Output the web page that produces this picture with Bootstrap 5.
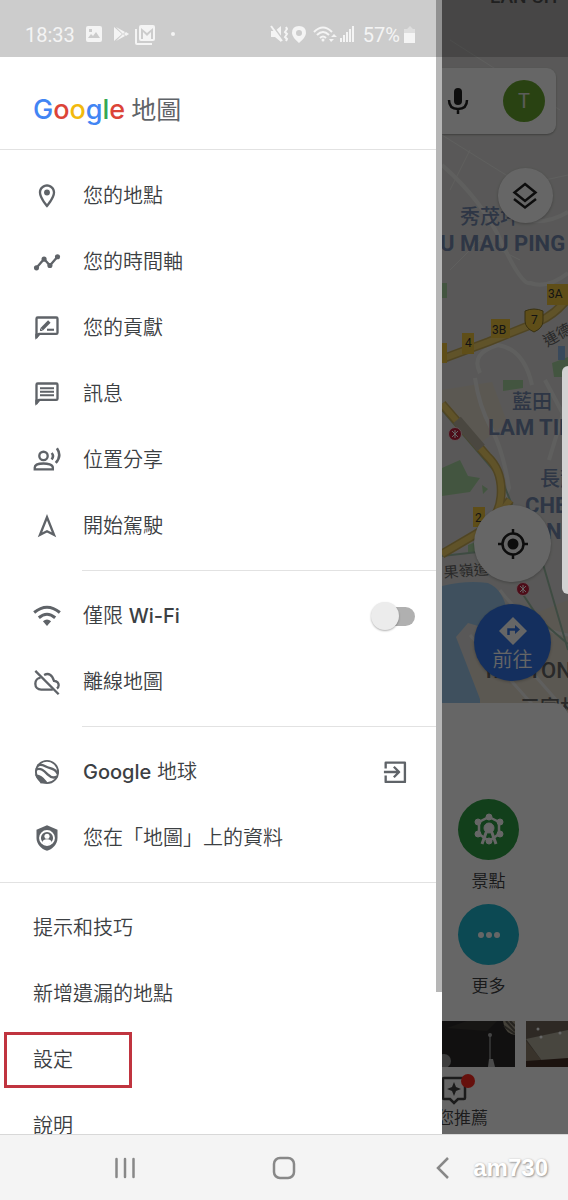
<!DOCTYPE html>
<html lang="zh-Hant">
<head>
<meta charset="utf-8">
<meta name="viewport" content="width=device-width, initial-scale=1">
<title>Google 地圖</title>
<link href="https://cdn.jsdelivr.net/npm/bootstrap@5.3.0/dist/css/bootstrap.min.css" rel="stylesheet">
<style>
  body { font-family: Inter, "Noto Sans CJK TC", sans-serif; font-size: 20px; line-height: 28px; color: #3c4043; background: #fff; }
  .app-stage { display: grid; grid-template-columns: minmax(0, 1fr) 126px; min-height: 0; }
  svg { display: block; flex: none; }

  /* Status bar */
  .status-bar { height: 57px; padding: 12px 152px 0 25px; background: rgba(0,0,0,.2); color: #f4f4f4; font-family: Roboto, sans-serif; z-index: 3; }

  /* Drawer */
  .drawer { background: #fff; padding-top: 57px; }
  .drawer-head { height: 93px; padding-left: 33px; padding-top: 13px; gap: 6px; border-bottom: 1px solid #e2e2e2; font-size: 25px; color: #5f6368; }
  .brand-word { font-size: 27px; font-weight: 500; }
  .c-blue { color: #4285f4; } .c-red { color: #dc4437; } .c-yellow { color: #f2b90c; } .c-green { color: #34a853; }
  .menu-group { padding: 12px 0 11px; border-bottom: 1px solid #e2e2e2; }
  .menu-group.first { padding: 13px 0 12px; }
  .menu-group.inset-line { border-bottom: 0; background: linear-gradient(#e2e2e2, #e2e2e2) 82px 100% / 100% 1px no-repeat; padding-bottom: 12px; }
  .menu-group.last { border-bottom: 0; }
  .menu-row { height: 66px; padding: 0 33px; display: flex; align-items: center; gap: 22px; color: #3c4043; text-decoration: none; font-weight: 350; white-space: nowrap; }
  .menu-row .latin { font-weight: 500; }
  .menu-row svg { color: #5f6368; }
  .menu-row.marked { height: 56px; width: 128px; margin: 5px 4px; padding: 0 26px; border: 3px solid #c0343f; }
  .wifi-switch { min-height: 0; padding: 0; margin: 0 -6px 0 auto; }
  .wifi-switch .form-check-input { appearance: none; display: block; float: none; margin: 0; width: 44px; height: 30px; border: 0; border-radius: 0; box-shadow: none; background: none; position: relative; }
  .wifi-switch .form-check-input::before { content: ""; position: absolute; left: 12px; top: 6px; width: 32px; height: 19px; border-radius: 10px; background: #b0b0b0; }
  .wifi-switch .form-check-input::after { content: ""; position: absolute; left: 0; top: 1px; width: 28px; height: 28px; border-radius: 50%; background: #ececec; box-shadow: 0 1px 2px rgba(0,0,0,.3); }
  .wifi-switch .form-check-input:checked::after { left: 16px; }
  .open-icon { margin-left: auto; }
  .drawer-scroll { top: 0; right: 0; width: 6px; height: 992px; background: #b6b6b6; }

  /* Map behind the drawer */
  .behind { background: #fff; }
  .scrim { inset: 0; background: rgba(0,0,0,.6); z-index: 2; }
  .map-area { background: #dedddb; min-height: 0; }
  .map-drawing { inset: 0; width: 100%; height: 100%; }
  .map-ui { padding-top: 68px; }
  .search-card { height: 66px; margin-right: 12px; padding: 0 11px 0 4px; background: #fff; border-radius: 0 9px 9px 0; box-shadow: 0 1px 2px rgba(0,0,0,.3); }
  .avatar { width: 42px; height: 42px; background: #68a62e; color: #e4e6e2; font: 20px/42px Roboto, sans-serif; padding: 0; border: 0; border-radius: 50%; }
  .round-btn { border: 0; padding: 0; border-radius: 50%; background: #fff; color: #222; display: flex; flex-direction: column; align-items: center; justify-content: center; box-shadow: 0 1px 3px rgba(0,0,0,.25); }
  .round-sm { width: 55px; height: 55px; margin: 34px 15px 0 0; }
  .round-lg { width: 77px; height: 77px; margin-right: 17px; }
  .locate { margin-top: 282px; }
  .go { margin-top: 22px; padding-top: 4px; gap: 2px; background: #3477ea; color: #fff; line-height: 26px; font-weight: 350; }
  .edge-handle { right: 0; top: 366px; width: 6px; height: 228px; border-radius: 6px 0 0 6px; background: #d2d2d2; z-index: 3; }

  .place-sheet { background: #fff; height: 431px; border-radius: 0 14px 0 0; margin-top: -10px; padding-top: 96px; position: relative; }
  .chip-col { width: 93px; gap: 4px; }
  .chip { height: 101px; border: 0; background: none; padding: 0; display: flex; flex-direction: column; align-items: center; gap: 7px; font-size: 17px; font-weight: 350; color: #3c4043; }
  .chip-dot { width: 61px; height: 61px; border-radius: 50%; display: grid; place-items: center; }
  .photos { margin-top: 16px; height: 46px; gap: 11px; }
  .tab { margin-top: 7px; margin-left: -22px; border: 0; background: none; padding: 0; text-align: left; font-size: 17px; line-height: 24px; font-weight: 350; color: #444; white-space: nowrap; }
  .tab svg { margin-left: 18px; }
  .tab-badge { left: 41px; top: 0; width: 14px; height: 14px; border-radius: 50%; background: #ff2a20; }

  /* System navigation */
  .sys-nav { height: 66px; padding: 0 45px; background: #f4f4f4; border-top: 1px solid #d8d8d8; }
  .sys-nav button { border: 0; background: none; color: #888; display: grid; place-items: center; flex: 1 1 0; }
  .watermark { right: 20px; top: 14px; font: bold 24px/38px "Liberation Sans", sans-serif; color: #fff; text-shadow: 1px 1px 2px #999, 0 0 2px #ccc; }
</style>
</head>
<body class="vh-100 overflow-hidden d-flex flex-column">

<main class="app-stage flex-fill position-relative overflow-hidden">
  <header class="status-bar position-absolute top-0 start-0 w-100 d-flex justify-content-between align-items-center">
    <div class="d-flex align-items-center">
      <span>18:33</span>
      <svg class="ms-2" width="78" height="22" viewBox="0 0 78 22" fill="currentColor">
        <path fill-rule="evenodd" d="M5 2h12q2 0 2 2v12q0 2-2 2H5q-2 0-2-2V4q0-2 2-2zM5 14h12l-4-6-3 4-2-2zM6 5v3h3V5z"/>
        <path d="M31 3v14l8-7zM33 3l9 5-2 2zM33 17l9-5-2-2zM43 8l3 2-3 2-2-2z"/>
        <path d="M54 5v14h15v2H54q-2 0-2-2V5z"/><path fill-rule="evenodd" d="M58 1h12q2 0 2 2v12q0 2-2 2H58q-2 0-2-2V3q0-2 2-2zm0 3v11h2V8l4 4 4-4v7h2V4l-6 5z"/>
      </svg>
      <svg width="20" height="22" viewBox="0 0 20 22" fill="currentColor"><circle cx="12" cy="10" r="2"/></svg>
    </div>
    <div class="d-flex align-items-center">
      <svg width="90" height="22" viewBox="0 0 90 22" fill="currentColor">
        <path d="M2 7h4l6-5v16l-6-5H2z"/><path d="m3 1 11 15" stroke="#ccc" stroke-width="2"/><path d="m2 2 11 15" stroke="currentColor" stroke-width="2"/><path d="m17 3 1 2-2 3 2 2-2 3 2 2-1 2" fill="none" stroke="currentColor" stroke-width="2"/>
        <path fill-rule="evenodd" d="M30 2q7 0 7 7 0 4-7 10-7-6-7-10 0-7 7-7zm0 4a3 3 0 1 0 0 6 3 3 0 0 0 0-6z"/>
        <g fill="none" stroke="currentColor" stroke-width="2"><path d="M45 8q9-9 18 0M48 11q6-6 12 0M51 14q3-3 6 0"/></g><circle cx="54" cy="16" r="1.500"/><path d="m65 10 3 3h-6zM60 15h5l-3 3z"/>
        <path d="M71 14h2v4h-2zM74 11h2v7h-2zM77 8h2v10h-2zM80 5h2v13h-2zM83 2h2v16h-2z"/>
      </svg>
      <span class="ms-1">57%</span>
      <svg class="ms-1" width="12" height="20" viewBox="0 0 12 20" fill="currentColor"><path opacity=".45" d="M0 4h3l3-3 3 3h2v4H0z"/><path d="M0 8h11v10H0z"/></svg>
    </div>
  </header>

  <nav class="drawer position-relative overflow-hidden" aria-label="選單">
    <div class="drawer-head d-flex align-items-center"><span class="brand-word"><span class="c-blue">G</span><span class="c-red">o</span><span class="c-yellow">o</span><span class="c-blue">g</span><span class="c-green">l</span><span class="c-red">e</span></span><span>地圖</span></div>

    <div class="menu-group inset-line first">
      <a class="menu-row" href="#"><svg width="28" height="28" viewBox="0 0 24 24" fill="currentColor"><path d="M12 2C8.130 2 5 5.130 5 9c0 5.250 7 13 7 13s7-7.750 7-13c0-3.870-3.130-7-7-7zM7 9c0-2.760 2.240-5 5-5s5 2.240 5 5c0 2.880-2.880 7.190-5 9.880C9.920 16.210 7 11.850 7 9z"/><circle cx="12" cy="9" r="2.500"/></svg>您的地點</a>
      <a class="menu-row" href="#"><svg width="28" height="28" viewBox="0 0 24 24" fill="none" stroke="currentColor" stroke-width="2"><path d="m3 17 6.500-7.500 5 5.500L21 7.500"/><g fill="currentColor" stroke="none"><circle cx="3" cy="17" r="2.200"/><circle cx="9.500" cy="9.500" r="2.200"/><circle cx="14.500" cy="15" r="2.200"/><circle cx="21" cy="7.500" r="2.200"/></g></svg>您的時間軸</a>
      <a class="menu-row" href="#"><svg width="28" height="28" viewBox="0 0 24 24" fill="none" stroke="currentColor" stroke-width="2"><path d="M3 20V4q0-1 1-1h16q1 0 1 1v12q0 1-1 1H5z" stroke-linejoin="round"/><path d="M2 22v-5h5z" fill="currentColor" stroke="none"/><path d="m7.500 13 6.500-6.500" stroke-width="3"/><path d="M12 13.500h6" stroke-width="1.800"/><path d="M6 14.500v-2.500l2.500 2.500z" fill="currentColor" stroke="none"/></svg>您的貢獻</a>
      <a class="menu-row" href="#"><svg width="28" height="28" viewBox="0 0 24 24" fill="none" stroke="currentColor" stroke-width="2"><path d="M3 20V4q0-1 1-1h16q1 0 1 1v12q0 1-1 1H5z" stroke-linejoin="round"/><path d="M2 22v-5h5z" fill="currentColor" stroke="none"/><path d="M6 7h12M6 10h12M6 13h12" stroke-width="1.700"/></svg>訊息</a>
      <a class="menu-row" href="#"><svg width="28" height="28" viewBox="0 0 24 24" fill="none" stroke="currentColor" stroke-width="2"><circle cx="9" cy="8.500" r="3.600"/><path d="M1.500 20v-1.500C1.500 16 5.500 15 9 15s8 1 8 3.500V20z"/><path d="M16 6q2.300 2.500 0 5.500M20.500 2q4.500 6.500-1 12.500" stroke-width="2.200"/></svg>位置分享</a>
      <a class="menu-row" href="#"><svg width="28" height="28" viewBox="0 0 24 24" fill="none" stroke="currentColor" stroke-width="2"><path d="m12 4.500 6 15-6-3-6 3z"/></svg>開始駕駛</a>
    </div>

    <div class="menu-group inset-line">
      <div class="menu-row"><svg width="28" height="28" viewBox="0 0 24 24" fill="none" stroke="currentColor" stroke-width="2.600"><path d="M1 9q11-9 22 0M5 13.500q7-6 14 0"/><path d="M8.500 16.500q3.500-3 7 0L12 20.500z" fill="currentColor" stroke="none"/></svg><label for="wifiOnly">僅限 <span class="latin">Wi-Fi</span></label>
        <div class="form-check form-switch wifi-switch"><input class="form-check-input" type="checkbox" role="switch" id="wifiOnly"></div></div>
      <a class="menu-row" href="#"><svg width="28" height="28" viewBox="0 0 24 24" fill="none" stroke="currentColor" stroke-width="2"><path d="m2 2.500 20 20"/><path d="M6.500 8.500C4 8.500 2 10.500 2 13.500S4 18.500 7 18.500h10M9.500 6q6-3 8.500 5 4 .5 4 3.800 0 1.700-1.500 2.700"/></svg>離線地圖</a>
    </div>

    <div class="menu-group">
      <a class="menu-row" href="#"><svg width="28" height="28" viewBox="0 0 24 24" fill="none" stroke="currentColor" stroke-width="1.600"><circle cx="12" cy="12" r="9.500"/><path d="M4 6.500c4-2 6 1 10 2s6 2 7 5M2.500 10c4-2 7 1 10 4s6 3 8 2" stroke-width="2"/><path d="M3 15q4 0 8 5.500L7 21z" fill="currentColor"/></svg><span><span class="latin">Google</span> 地球</span>
        <svg class="open-icon" width="28" height="28" viewBox="0 0 24 24" fill="none" stroke="currentColor" stroke-width="2"><path d="M4 9V4h16.500v16.500H4V15M2.500 12H15M11 7.500l4.500 4.500-4.500 4.500" stroke-linejoin="round"/></svg></a>
      <a class="menu-row" href="#"><svg width="28" height="28" viewBox="0 0 24 24"><path d="m12 1 9 4v7c0 5-4 9.500-9 11-5-1.500-9-6-9-11V5z" fill="currentColor"/><circle cx="12" cy="12" r="6" fill="none" stroke="#fff" stroke-width="1.600"/><circle cx="12" cy="10.500" r="2.200" fill="#fff"/><path d="M8 16q0-3 4-3t4 3l-4 2z" fill="#fff"/></svg>您在「地圖」上的資料</a>
    </div>

    <div class="menu-group last">
      <a class="menu-row" href="#">提示和技巧</a>
      <a class="menu-row" href="#">新增遺漏的地點</a>
      <a class="menu-row marked" href="#">設定</a>
      <a class="menu-row" href="#">說明</a>
    </div>
    <div class="drawer-scroll position-absolute"></div>
  </nav>

  <section class="behind position-relative d-flex flex-column overflow-hidden">
    <div class="map-area position-relative flex-fill">
      <svg class="map-drawing position-absolute" viewBox="442 0 126 713" preserveAspectRatio="xMidYMin slice" font-family="Roboto, 'Noto Sans CJK TC', sans-serif">
        <path fill="#e4dccd" d="M442 390l50-8 15 40-25 20-40-32zM470 640l98-40v113h-98z"/>
        <path fill="#9fc9eb" d="M442 586q24-6 46-3 14 6 18 24l-4 26-34-10-12 14 24 62v14h-38z"/>
        <g fill="#a8d5a0"><path d="M442 283h5v15h-5zM503 380h20v8l-20 3zM442 468l18-8 8 16 12 2-10 14-28 4zM552 363l16-6v20h-14zM482 485l6 4-5 5zM468 545l10-4v12h-10z"/></g>
        <path fill="#8fb6e4" d="M558 346h7v14h-7z"/>
        <g fill="none" stroke="#eeeeec" stroke-width="4">
          <path d="M442 165q40 35 60 78t28 40q18 6 38-10"/><path d="M475 378q4 28 16 50t18 60l-10 20"/><path d="M545 380l18 34-14 46M480 373q-10-20 18-28 26 4 34 40M510 215q30 14 58-3"/>
          <path d="M500 590q30 40 68 45M470 635l70 78M495 630l70 80" stroke-width="3"/>
          <path d="M450 40l110 70M442 135l80 50 46-10M450 270l30-30 40 20M470 150l-20 40" stroke-width="1"/>
        </g>
        <path d="M442 410l60 70 12 30M536 540l32 110M442 556l45-5M520 590l20 30 28 24" fill="none" stroke="#9cbca5" stroke-width="2"/>
        <g fill="none" stroke-linejoin="round"><path stroke="#c9ad58" stroke-width="9" d="M442 359l46-17 50-20q18-8 30-24M442 404l45 52q16 15 14 40t-25 38l-34 20M510 500l-16 22"/><path d="M442 359l46-17 50-20q18-8 30-24M442 404l45 52q16 15 14 40t-25 38l-34 20M510 500l-16 22" stroke="#f0cf68" stroke-width="6"/></g>
        <path d="M457 420l24 28" stroke="#b8b2a0" stroke-width="10"/>
        <g fill="#edc43c"><path d="M462 333h12v21h-12zM491 319h19v19h-19zM547 284h21v21h-21zM473 507h12v20h-12zM442 343h5v20h-5z"/><path d="M525 311q9-4 18 0v10q0 7-9 11-9-4-9-11z" stroke="#8b782d"/></g>
        <g font-size="12" fill="#333"><text x="465" y="347">4</text><text x="492" y="334">3B</text><text x="548" y="298">3A</text><text x="531" y="324">7</text><text x="475" y="522">2</text></g>
        <g fill="#666" font-size="15"><text transform="translate(547 347) rotate(-30)">連德道</text><text x="444" y="578" transform="rotate(-5 444 578)">果嶺道</text></g>
        <g fill="#7388ad" font-weight="700"><g font-size="20" font-weight="500"><text x="460" y="224">秀茂坪</text><text x="512" y="409">藍田</text><text x="540" y="486">長龍</text></g>
          <g font-size="22"><text x="440" y="251">U MAU PING</text><text x="488" y="435">LAM TIN</text><text x="525" y="513">CHEUNG</text><text x="546" y="539">NG</text></g></g>
        <g fill="#666" font-weight="500"><text x="490" y="3" font-size="19">LAN CH</text><text x="482" y="678" font-size="22">YAU TONG</text><text x="520" y="715" font-size="20">三家村</text></g>
        <g fill="#c0203e" stroke="#efd5d9"><circle cx="455" cy="434" r="6.500"/><circle cx="523" cy="589" r="6.500"/></g><path d="M452 431l6 6M458 431l-6 6M455 430v8M520 586l6 6M526 586l-6 6M523 585v8" fill="none" stroke="#fff"/>
      </svg>
      <div class="map-ui position-relative d-flex flex-column align-items-end">
        <div class="search-card align-self-stretch d-flex align-items-center justify-content-between">
          <svg width="25" height="32" viewBox="0 0 25 32" fill="none" stroke="#222" stroke-width="2.500"><rect x="8" y="3" width="8" height="17" rx="4" fill="#222" stroke="none"/><path d="M3 15q0 9 9 9t9-9M12 24v5"/></svg>
          <button class="avatar" type="button">T</button>
        </div>
        <button class="round-btn round-sm" type="button" aria-label="圖層"><svg width="28" height="30" viewBox="0 0 28 30" fill="none" stroke="currentColor" stroke-width="2.500"><path d="m13 3 10.500 8.500L13 20 2.500 11.500zM2 18l11 8.500L24 18"/></svg></button>
        <button class="round-btn round-lg locate" type="button" aria-label="我的位置"><svg width="30" height="30" viewBox="0 0 30 30" fill="none" stroke="currentColor" stroke-width="2.500"><circle cx="15" cy="15" r="10.500"/><circle cx="15" cy="15" r="5.500" fill="currentColor" stroke="none"/><path d="M15 0v5M15 25v5M0 15h5M25 15h5"/></svg></button>
        <button class="round-btn round-lg go" type="button"><svg width="28" height="28" viewBox="0 0 28 28"><path d="M14 0 28 14 14 28 0 14z" fill="#fff"/><path d="M9.500 18v-5.500H18" fill="none" stroke="#3477ea" stroke-width="2.500"/><path d="m16 8 5 4.500-5 4.500z" fill="#3477ea"/></svg>前往</button>
      </div>
    </div>

    <div class="place-sheet">
      <div class="chip-col d-flex flex-column">
        <button class="chip" type="button"><span class="chip-dot" style="background:#2f9e44"><svg width="34" height="34" viewBox="0 0 34 34" fill="#fff" stroke="#fff"><path d="M17 4 27 9v12l-10 7-10-7V9z" fill="none" stroke-width="2.500"/><circle cx="17" cy="15" r="5"/><path d="m15 17-5 14M19 17l5 14" stroke-width="3"/><circle cx="17" cy="4" r="3"/><circle cx="6" cy="9" r="3"/><circle cx="28" cy="9" r="3"/><circle cx="6" cy="21" r="3"/><circle cx="28" cy="21" r="3"/><circle cx="17" cy="28" r="3"/></svg></span>景點</button>
        <button class="chip" type="button"><span class="chip-dot" style="background:#1fb6cf"><svg width="24" height="8" viewBox="0 0 24 8" fill="#fff"><circle cx="4" cy="4" r="3"/><circle cx="12" cy="4" r="3"/><circle cx="20" cy="4" r="3"/></svg></span>更多</button>
      </div>
      <div class="photos d-flex">
        <svg width="73" height="46" viewBox="0 0 73 46"><path fill="#2c2a29" d="M0 0h73v46H0z"/><path d="M5 7l20-7h30l-10 10z" fill="#3b3734"/><path d="M61 0q2 13 12 14V0z" fill="#aaa28f"/><path d="M64 0l9 10M68 0l5 5M62 5l11 8" stroke="#5d584f" stroke-width="2"/><path d="M48 14v25" stroke="#777" stroke-width="2"/><circle cx="48" cy="14" r="2" fill="#aaa"/><path d="M47 38h4l2 8h-7z" fill="#bbb"/><circle cx="2" cy="40" r="7" fill="#999"/></svg>
        <svg width="42" height="46" viewBox="0 0 42 46"><path fill="#73685a" d="M0 0h42v46H0z"/><path d="M0 18l42-9v31H16z" fill="#b4ae9f"/><path d="M0 20l16 20H0z" fill="#8f806c"/><path d="M0 40l42-3v9H0z" fill="#463126"/><g fill="#fff"><circle cx="12" cy="8" r="1.500"/><circle cx="34" cy="12" r="1.500"/><circle cx="15" cy="16" r="1.500"/></g></svg>
      </div>
      <button class="tab position-relative d-block" type="button"><svg width="34" height="32" viewBox="0 0 34 32" fill="none" stroke="#444" stroke-width="2.500"><path d="M6 4h20q1 0 1 1v19q0 1-1 1h-6l-4 4-4-4H6q-1 0-1-1V5q0-1 1-1z"/><path d="M16 8l2 5 5 2-5 2-2 5-2-5-5-2 5-2z" fill="#444" stroke="none"/></svg><span class="tab-badge position-absolute"></span>為您推薦</button>
    </div>
    <div class="scrim position-absolute"></div>
    <div class="edge-handle position-absolute"></div>
  </section>
</main>

<footer class="sys-nav position-relative d-flex flex-shrink-0">
  <button type="button" aria-label="最近使用"><svg width="24" height="24" viewBox="0 0 24 24" stroke="currentColor" stroke-width="2.500" stroke-linecap="round"><path d="M3.500 3v18M12 3v18M20.500 3v18"/></svg></button>
  <button type="button" aria-label="主畫面"><svg width="24" height="24" viewBox="0 0 24 24" fill="none" stroke="currentColor" stroke-width="2.500"><rect x="2" y="2" width="20" height="20" rx="6"/></svg></button>
  <button type="button" aria-label="返回"><svg width="24" height="24" viewBox="0 0 24 24" fill="none" stroke="currentColor" stroke-width="2.500"><path d="M17 2 7 12l10 10"/></svg></button>
  <span class="watermark position-absolute">am730</span>
</footer>

<script src="https://cdn.jsdelivr.net/npm/bootstrap@5.3.0/dist/js/bootstrap.bundle.min.js"></script>
</body>
</html>
